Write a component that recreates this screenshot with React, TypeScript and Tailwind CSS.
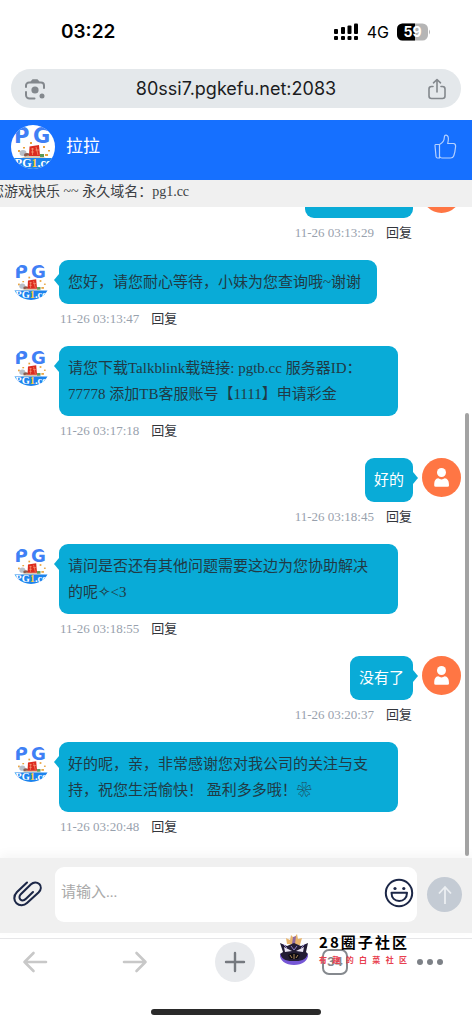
import { useState } from "react";

type Message = {
  id: number;
  from: "agent" | "me";
  text: string;
  time: string;
};

const messages: Message[] = [
  { id: 1, from: "me", text: "我的彩金在哪", time: "11-26 03:13:29" },
  {
    id: 2,
    from: "agent",
    text: "您好，请您耐心等待，小妹为您查询哦~谢谢",
    time: "11-26 03:13:47",
  },
  {
    id: 3,
    from: "agent",
    text: "请您下载Talkblink载链接: pgtb.cc 服务器ID： 77778 添加TB客服账号【1111】申请彩金",
    time: "11-26 03:17:18",
  },
  { id: 4, from: "me", text: "好的", time: "11-26 03:18:45" },
  {
    id: 5,
    from: "agent",
    text: "请问是否还有其他问题需要这边为您协助解决的呢✧<3",
    time: "11-26 03:18:55",
  },
  { id: 6, from: "me", text: "没有了", time: "11-26 03:20:37" },
  {
    id: 7,
    from: "agent",
    text: "好的呢，亲，非常感谢您对我公司的关注与支持，祝您生活愉快！ 盈利多多哦！❀",
    time: "11-26 03:20:48",
  },
];

function StatusBar() {
  return (
    <div className="flex h-[69px] shrink-0 items-center justify-between pb-[5px] pl-[61px] pr-[41px] font-['Inter','Noto_Sans_CJK_SC',sans-serif]">
      <span className="text-[19px] font-semibold leading-6 text-black">
        03:22
      </span>
      <div className="flex items-center gap-2">
        <svg width="25" height="18" viewBox="0 0 25 18" fill="#000">
          <rect x="0" y="6" width="4" height="5" rx="1" />
          <rect x="7" y="4" width="4" height="7" rx="1" />
          <rect x="13.500" y="2.500" width="4" height="8.500" rx="1" />
          <rect x="20" y="0.500" width="4" height="10.500" rx="1" />
          <rect x="0" y="13" width="4" height="4" rx="1" />
          <rect x="7" y="13" width="4" height="4" rx="1" />
          <rect x="13.500" y="13" width="4" height="4" rx="1" />
          <rect x="20" y="13" width="4" height="4" rx="1" />
        </svg>
        <span className="text-[16px] leading-5 text-black">4G</span>
        <svg width="34" height="18" viewBox="0 0 34 18">
          <defs>
            <clipPath id="battery">
              <rect x="0" y="0.500" width="31" height="17" rx="5.500" />
            </clipPath>
          </defs>
          <g clipPath="url(#battery)">
            <rect width="31" height="18" fill="#b5b5b5" />
            <rect width="18" height="18" fill="#000" />
          </g>
          <path d="M32 6.500 Q34 9 32 11.500 Z" fill="#b5b5b5" />
          <text
            x="15.500"
            y="14"
            textAnchor="middle"
            fontSize="14"
            fontWeight="700"
            fill="#fff"
          >
            59
          </text>
        </svg>
      </div>
    </div>
  );
}

function AddressBar() {
  return (
    <div className="mx-[11px] flex h-[39px] shrink-0 items-center rounded-full bg-[#e4e8eb] px-[13px]">
      <button aria-label="Lens">
        <svg
          width="22"
          height="22"
          viewBox="0 0 22 22"
          fill="none"
          stroke="#83888d"
          strokeWidth="2"
          strokeLinecap="round"
        >
          <path d="M2 9V7.500A3 3 0 0 1 5 4.500H17A3 3 0 0 1 20 7.500V10" />
          <path d="M2 14V17A3.500 3.500 0 0 0 5.500 20.500H10.500" />
          <path d="M7.500 4 L9 2.300H13L14.500 4" fill="#83888d" />
          <circle cx="11" cy="12" r="3.600" fill="#83888d" stroke="none" />
          <circle cx="18" cy="18" r="2.500" fill="#83888d" stroke="none" />
        </svg>
      </button>
      <input
        readOnly
        aria-label="Address"
        value="80ssi7.pgkefu.net:2083"
        className="min-w-0 flex-1 bg-transparent text-center font-['Inter',sans-serif] text-[18px] leading-6 text-[#1b1c1e] outline-none"
      />
      <button aria-label="Share">
        <svg
          width="22"
          height="22"
          viewBox="0 0 22 22"
          fill="none"
          stroke="#83888d"
          strokeWidth="1.600"
          strokeLinecap="round"
          strokeLinejoin="round"
        >
          <path d="M7 8.500H5.500A2.500 2.500 0 0 0 3 11V18A2.500 2.500 0 0 0 5.500 20.500H16.500A2.500 2.500 0 0 0 19 18V11A2.500 2.500 0 0 0 16.500 8.500H15" />
          <path d="M11 14V1.500M7.500 4.800L11 1.500L14.500 4.800" />
        </svg>
      </button>
    </div>
  );
}

function AgentAvatar({ id, className }: { id: string; className: string }) {
  return (
    <svg viewBox="0 0 44 44" className={className} aria-label="PG1.cc">
      <defs>
        <clipPath id={id}>
          <circle cx="22" cy="22" r="22" />
        </clipPath>
      </defs>
      <g clipPath={`url(#${id})`}>
        <rect width="44" height="44" fill="#fff" />
        <g
          fontFamily="DejaVu Sans, sans-serif"
          fontSize="21"
          fontWeight="700"
          fill="#3f80f5"
        >
          <text x="3" y="18">
            P
          </text>
          <text x="22" y="18">
            G
          </text>
        </g>
        <g fill="#e9a23c">
          <rect x="7" y="25" width="2" height="2" />
          <rect x="12" y="22" width="2" height="1.500" />
          <rect x="32" y="21" width="2" height="2" />
          <rect x="37" y="25" width="2" height="1.500" />
          <rect x="34" y="29" width="3" height="2" />
          <rect x="19" y="17" width="2" height="2" />
        </g>
        <ellipse cx="12" cy="28" rx="3.500" ry="3" fill="#b9c0c9" />
        <ellipse cx="16" cy="30" rx="3" ry="2" fill="#8a5b4c" />
        <path d="M10 33Q22 27 35 33Z" fill="#d8c9b4" />
        <path d="M18.500 21.500L28 20L29 31L18 31Z" fill="#dc2c1f" />
        <path
          d="M20 24H23M20 27H23M21.500 23V30M25 22L27 30M24.500 25H28"
          stroke="#ffb48a"
          strokeWidth="0.600"
        />
        <rect x="29" y="29" width="4" height="3" fill="#5c9a56" />
        <rect y="33" width="44" height="11" fill="#1c83ee" />
        <text
          x="22"
          y="42"
          textAnchor="middle"
          fontFamily="Liberation Serif, serif"
          fontSize="12"
          fontWeight="700"
          fill="#fff"
        >
          PG<tspan fill="#ffcf3d">1</tspan>.cc
        </text>
      </g>
    </svg>
  );
}

function UserAvatar() {
  return (
    <svg
      viewBox="0 0 39 39"
      className="ml-1 h-[39px] w-[39px] shrink-0"
      aria-hidden="true"
    >
      <circle cx="19.500" cy="19.500" r="19.500" fill="#ff7644" />
      <circle cx="19.500" cy="14.500" r="4.500" fill="#fff" />
      <path
        d="M12.200 27.500C12.200 22.500 13.500 20.700 16.200 20.300Q19.500 22.500 22.800 20.300C25.500 20.700 27 22.500 27 27.500Q27 28.800 25.500 28.800H13.700Q12.200 28.800 12.200 27.500Z"
        fill="#fff"
      />
    </svg>
  );
}

function ChatHeader() {
  return (
    <header className="mt-3 flex h-[60px] shrink-0 items-center bg-[#1670ff] pb-[6px] pl-[11px] pr-[15px]">
      <AgentAvatar id="avatar-header" className="h-11 w-11" />
      <h1 className="ml-[11px] text-[17px] leading-6 text-white">拉拉</h1>
      <button aria-label="点赞" className="ml-auto">
        <svg
          width="24"
          height="26"
          viewBox="0 0 24 26"
          fill="none"
          stroke="#b5d1ff"
          strokeWidth="1.200"
          strokeLinejoin="round"
        >
          <path d="M2.500 10.500H6.500V24H4.500Q3.200 24 3 22.500L2 11.500Q2 10.500 2.500 10.500Z" />
          <path d="M6.500 10.500C9.500 9 11.200 7 11.300 3.500C11.400 1.500 12.200 1 13.200 1.200C15.300 1.700 15.700 4 15.200 7L14.700 9.500H20.500Q22.800 9.800 22.600 12.500C22.300 16 21.800 19 20.700 22Q20 24 17.500 24H9Q7.500 24 6.500 22.500" />
        </svg>
      </button>
    </header>
  );
}

function ChatMessage({ message }: { message: Message }) {
  const mine = message.from === "me";

  const meta = (
    <div className="mt-[5px] flex h-5 items-center gap-3 px-px text-[13px] leading-5">
      <time className="text-[#98a1ad]">{message.time}</time>
      <button className="text-[#33363c]">回复</button>
    </div>
  );

  if (mine) {
    return (
      <li className="flex items-start justify-end pb-[17px] pl-[74px] pr-[11px]">
        <div className="flex flex-col items-end">
          <p className="rounded-[9px] bg-[#09abd7] p-[9px] text-[15px] leading-[26px] text-white">
            {message.text}
          </p>
          {meta}
        </div>
        <span className="mt-[14px] border-y-6 border-l-5 border-y-transparent border-l-[#09abd7]" />
        <UserAvatar />
      </li>
    );
  }

  return (
    <li className="flex items-start pb-[17px] pl-3 pr-[74px]">
      <AgentAvatar
        id={`avatar-${message.id}`}
        className="mr-1 mt-[2px] h-[38px] w-[38px] shrink-0"
      />
      <span className="mt-[14px] border-y-6 border-r-5 border-y-transparent border-r-[#09abd7]" />
      <div className="flex min-w-0 flex-col items-start">
        <p className="rounded-[9px] bg-[#09abd7] py-[9px] pl-[9px] pr-4 text-[15px] leading-[26px] text-[#203a45]">
          {message.text}
        </p>
        {meta}
      </div>
    </li>
  );
}

function Composer() {
  const [value, setValue] = useState("");

  return (
    <form
      className="flex h-[75px] shrink-0 items-start bg-[#f0f0f0] pl-[13px] pr-[10px] pt-[9px] shadow-[0_-4px_10px_rgba(0,0,0,0.04)]"
      onSubmit={(event) => event.preventDefault()}
    >
      <button type="button" aria-label="附件" className="mt-[13px]">
        <svg
          width="30"
          height="28"
          viewBox="0 0 30 28"
          fill="none"
          stroke="#1c2747"
          strokeWidth="2.100"
          strokeLinecap="round"
          strokeLinejoin="round"
        >
          <path d="M14 2.500L4 12C0 16 1 21 3.500 23.300C6.500 26 11 25.800 14 23L25.500 12.500C28.500 9.500 28.300 6 26.300 4C24 2 20.500 2 18 4.300L8 14C6 16 6.200 18.300 7.400 19.500C8.700 20.700 11 20.700 13 18.800L20 12" />
        </svg>
      </button>
      <div className="ml-3 flex h-[55px] min-w-0 flex-1 rounded-[9px] bg-white pl-[6px] pr-[3px]">
        <input
          aria-label="请输入"
          placeholder="请输入..."
          value={value}
          onChange={(event) => setValue(event.target.value)}
          className="min-w-0 flex-1 pb-[6px] text-[15px] leading-6 text-[#203a45] outline-none placeholder:text-[#a9a9a9]"
        />
        <button type="button" aria-label="表情" className="pb-1">
          <svg
            width="30"
            height="30"
            viewBox="0 0 30 30"
            fill="none"
            stroke="#1c2747"
            strokeWidth="2"
            strokeLinejoin="round"
          >
            <circle cx="15" cy="15" r="13.200" />
            <path d="M7.500 14.800H23C23 20 19.500 23 15.200 23S7.500 20 7.500 14.800Z" />
            <circle cx="11" cy="10.500" r="1.600" fill="#1c2747" stroke="none" />
            <circle cx="19.800" cy="10.500" r="1.600" fill="#1c2747" stroke="none" />
          </svg>
        </button>
      </div>
      <button
        aria-label="发送"
        className="ml-[10px] mt-[10px] flex h-[35px] w-[35px] items-center justify-center rounded-full bg-[#c4cbd4]"
      >
        <svg
          width="18"
          height="20"
          viewBox="0 0 18 20"
          fill="none"
          stroke="#eceff2"
          strokeWidth="1.800"
        >
          <path d="M9 19V2M3 8.500L9 2L15 8.500" />
        </svg>
      </button>
    </form>
  );
}

function BrowserNav() {
  return (
    <nav className="mt-[5px] flex shrink-0 justify-between border-t border-[#e6e6e8] pl-[15px] pr-[27px] pt-[3px] font-['Inter',sans-serif]">
      <button
        aria-label="Back"
        className="flex h-10 w-10 items-center justify-center"
      >
        <svg
          width="26"
          height="22"
          viewBox="0 0 26 22"
          fill="none"
          stroke="#c8c8c8"
          strokeWidth="2.600"
          strokeLinecap="round"
          strokeLinejoin="round"
        >
          <path d="M24 11H2.500M11.500 2L2.500 11L11.500 20" />
        </svg>
      </button>
      <button
        aria-label="Forward"
        className="flex h-10 w-10 items-center justify-center"
      >
        <svg
          width="26"
          height="22"
          viewBox="0 0 26 22"
          fill="none"
          stroke="#c8c8c8"
          strokeWidth="2.600"
          strokeLinecap="round"
          strokeLinejoin="round"
        >
          <path d="M2 11H23.500M14.500 2L23.500 11L14.500 20" />
        </svg>
      </button>
      <button
        aria-label="New tab"
        className="flex h-10 w-10 items-center justify-center rounded-full bg-[#e8eaed]"
      >
        <svg
          width="22"
          height="22"
          viewBox="0 0 22 22"
          stroke="#75797f"
          strokeWidth="2.400"
          strokeLinecap="round"
        >
          <path d="M11 2V20M2 11H20" />
        </svg>
      </button>
      <button
        aria-label="Tabs"
        className="flex h-10 w-10 items-center justify-center"
      >
        <span className="flex h-[26px] w-[26px] items-center justify-center rounded-[7px] border-2 border-[#85898e] text-[12px] font-bold leading-4 text-[#85898e]">
          34
        </span>
      </button>
      <button
        aria-label="Menu"
        className="flex h-10 w-[30px] items-center justify-center gap-1"
      >
        <span className="h-[6px] w-[6px] rounded-full bg-[#7d8187]" />
        <span className="h-[6px] w-[6px] rounded-full bg-[#7d8187]" />
        <span className="h-[6px] w-[6px] rounded-full bg-[#7d8187]" />
      </button>
    </nav>
  );
}

function CommunityBadge() {
  return (
    <div className="pointer-events-none absolute bottom-[58px] right-[65px] flex items-start gap-[10px] font-['Noto_Sans_CJK_SC',sans-serif]">
      <svg width="30" height="32" viewBox="0 0 30 32">
        <path
          d="M8 10L7 4L11 6L12 1L15 4L18 0L19 5L23 4L21 11Z"
          fill="#e8b46c"
        />
        <path d="M14 3L17 2L16 10H13Z" fill="#8d6aa0" />
        <path
          d="M1 9L8 12L15 9L22 12L29 9L27 18L29 20C28 28 21 30 15 30S2 28 1 20L4 18Z"
          fill="#231d35"
        />
        <path
          d="M1 19C3 27 9 27 15 27S27 27 29 19C30 27 23 31 15 31S0 27 1 19Z"
          fill="#7657d6"
        />
        <path d="M5 13L13 17L6 18ZM25 13L17 17L24 18Z" fill="#e9e4f4" />
        <path
          d="M4 10L8 14M26 10L22 14M12 12L15 16L18 12"
          stroke="#8f83c5"
          fill="none"
        />
        <path d="M9 21Q15 17 21 21L19 25H11Z" fill="#0d0b12" />
        <path
          d="M11 21L13 24M15 20V25M19 21L17 24"
          stroke="#d5a76c"
          strokeWidth="0.800"
        />
      </svg>
      <div className="w-[88px]">
        <p className="flex justify-between text-[15px] font-bold leading-4 text-black">
          {[..."28圈子社区"].map((char) => (
            <span key={char}>{char}</span>
          ))}
        </p>
        <p className="mt-1 flex justify-between text-[8px] font-bold leading-3 text-[#e8414f]">
          {[..."有趣的白菜社区"].map((char) => (
            <span key={char}>{char}</span>
          ))}
        </p>
      </div>
    </div>
  );
}

export default function App() {
  return (
    <div className="relative flex h-screen flex-col overflow-hidden bg-white font-['Liberation_Serif','Noto_Sans_CJK_SC','DejaVu_Sans',serif]">
      <StatusBar />
      <AddressBar />
      <ChatHeader />
      <div className="h-[27px] shrink-0 overflow-hidden bg-[#f0f0f0]">
        <p className="-ml-[10px] whitespace-nowrap text-[14px] leading-[23px] text-[#3c3f44]">
          您游戏快乐 ~~ 永久域名：pg1.cc
        </p>
      </div>
      <main className="relative flex min-h-0 flex-1 flex-col justify-end overflow-hidden">
        <ul className="flex shrink-0 flex-col pb-1">
          {messages.map((message) => (
            <ChatMessage key={message.id} message={message} />
          ))}
        </ul>
        <span className="absolute bottom-[2px] right-[3px] h-[68%] w-1 rounded-full bg-[#a3a3a3]" />
      </main>
      <Composer />
      <BrowserNav />
      <div className="mx-auto mb-[9px] mt-[27px] h-[6px] w-[36%] shrink-0 rounded-full bg-[#2a2a2a]" />
      <CommunityBadge />
    </div>
  );
}
